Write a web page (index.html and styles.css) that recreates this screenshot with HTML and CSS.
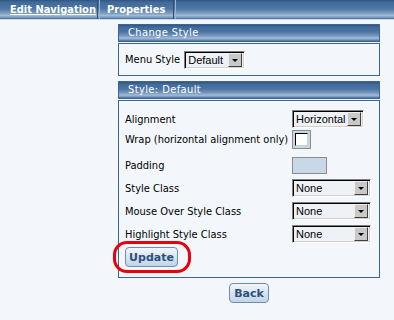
FILE: index.html
```html
<!DOCTYPE html>
<html lang="en">
<head>
    <meta charset="UTF-8">
    <title>Edit Navigation</title>
    <link rel="stylesheet" href="styles.css">
</head>
<body>
    <div class="tabbar">
        <span class="tab-cap"></span>
        <a class="tab tab-active" href="#">Edit Navigation</a>
        <span class="tab-sep"></span>
        <a class="tab tab-props" href="#">Properties</a>
        <span class="tab-sep"></span>
    </div>

    <div class="content">
        <div class="panel">
            <div class="panel-header">Change Style</div>
            <div class="panel-body panel-body-short">
                <span class="label">Menu Style</span>
                <div class="combo combo-default">
                    <span class="combo-text">Default</span>
                    <span class="combo-btn"><span class="arrow"></span></span>
                </div>
            </div>
        </div>

        <div class="panel">
            <div class="panel-header">Style: Default</div>
            <div class="panel-body">
                <div class="row row-first">
                    <span class="label">Alignment</span>
                    <div class="combo combo-align">
                        <span class="combo-text">Horizontal</span>
                        <span class="combo-btn"><span class="arrow"></span></span>
                    </div>
                </div>
                <div class="row row-wrap">
                    <span class="label">Wrap (horizontal alignment only)</span>
                    <span class="checkbox"><span class="check-inner"></span></span>
                </div>
                <div class="row row-padding">
                    <span class="label">Padding</span>
                    <span class="textbox"></span>
                </div>
                <div class="row">
                    <span class="label">Style Class</span>
                    <div class="combo combo-wide">
                        <span class="combo-text">None</span>
                        <span class="combo-btn"><span class="arrow"></span></span>
                    </div>
                </div>
                <div class="row">
                    <span class="label">Mouse Over Style Class</span>
                    <div class="combo combo-wide">
                        <span class="combo-text">None</span>
                        <span class="combo-btn"><span class="arrow"></span></span>
                    </div>
                </div>
                <div class="row">
                    <span class="label">Highlight Style Class</span>
                    <div class="combo combo-wide">
                        <span class="combo-text">None</span>
                        <span class="combo-btn"><span class="arrow"></span></span>
                    </div>
                </div>
                <div class="update-wrap">
                    <button class="btn">Update</button>
                    <span class="highlight-ring"></span>
                </div>
            </div>
        </div>

        <div class="back-row">
            <button class="btn">Back</button>
        </div>
    </div>
</body>
</html>
```

FILE: styles.css
```css
:root {
    --page-bg: #f3f7fb;
    --panel-border: #3a6595;
    --bar-grad: linear-gradient(#2f5680 0%, #41699a 12%, #4d76a3 45%, #7c9dc2 70%, #a3bcd6 82%, #6f91b7 94%, #3a6595 100%);
}

* {
    margin: 0;
    padding: 0;
    box-sizing: border-box;
}

body {
    font-family: 'DejaVu Sans Condensed', 'DejaVu Sans', sans-serif;
    font-size: 11px;
    background: var(--page-bg);
    color: #000;
}

.tabbar {
    height: 20px;
    background: var(--bar-grad);
    border-bottom: 1px solid #cfdbe8;
    display: flex;
    align-items: center;
}

.tab-cap {
    width: 10px;
    height: 100%;
}

.tab {
    color: #fff;
    font-weight: bold;
    font-size: 11px;
    text-decoration: none;
    white-space: nowrap;
    line-height: 18px;
}

.tab-active {
    text-decoration: underline;
    width: 87px;
}

.tab-props {
    width: 66px;
}

.tab-sep {
    width: 3px;
    height: 100%;
    border-left: 1px solid #2d527c;
    border-right: 1px solid #9bb4d0;
    margin-right: 7px;
}

.content {
    margin: 4px 0 0 118px;
    width: 262px;
}

.panel {
    margin-bottom: 5px;
}

.panel-header {
    height: 18px;
    background: var(--bar-grad);
    border: 1px solid var(--panel-border);
    color: #fff;
    letter-spacing: 0.4px;
    padding-left: 9px;
    line-height: 16px;
}

.panel-body {
    border: 1px solid var(--panel-border);
    margin-top: 1px;
    padding: 9px 6px 10px 6px;
    background: var(--page-bg);
}

.panel-body-short {
    height: 33px;
    display: flex;
    align-items: center;
    gap: 4px;
    padding: 0 6px;
}

.row {
    display: grid;
    grid-template-columns: 167px auto;
    align-items: center;
    height: 18px;
    margin-top: 5px;
    white-space: nowrap;
}

.row-first {
    margin-top: 0;
}

.row-wrap {
    height: 19px;
    margin-top: 2px;
}

.row-padding {
    height: 17px;
    margin-top: 8px;
}

.combo {
    display: flex;
    height: 18px;
    background: #eef2f7;
    border: 1px solid;
    border-color: #808080 #fff #fff #808080;
    box-shadow: inset 1px 1px 0 #000, inset -1px -1px 0 #d4d0c8;
    padding: 2px;
    align-items: center;
    font-family: 'Liberation Sans', sans-serif;
    font-size: 11px;
}

.combo-default {
    width: 61px;
}

.combo-align {
    width: 72px;
}

.combo-wide {
    width: 79px;
}

.combo-text {
    flex: 1;
    padding-left: 1px;
    line-height: 14px;
    overflow: hidden;
    white-space: nowrap;
}

.combo-btn {
    flex: none;
    width: 14px;
    height: 14px;
    background: #c8c8c8;
    border: 1px solid;
    border-color: #eee #404040 #404040 #eee;
    display: flex;
    align-items: center;
    justify-content: center;
}

.arrow {
    width: 0;
    height: 0;
    border-left: 3px solid transparent;
    border-right: 3px solid transparent;
    border-top: 3px solid #000;
    margin-top: 1px;
}

.checkbox {
    width: 19px;
    height: 19px;
    background: #c6d7e8;
    border: 1px solid #8c8c8c;
    padding: 2px;
}

.check-inner {
    display: block;
    width: 13px;
    height: 13px;
    background: #fff;
    border-top: 1px solid #000;
    border-left: 1px solid #000;
    border-right: 1px solid #d0d0d0;
    border-bottom: 1px solid #d0d0d0;
}

.textbox {
    width: 35px;
    height: 17px;
    background: #c8d8e8;
    border: 1px solid #8c8c8c;
}

.update-wrap {
    position: relative;
    margin-top: 4px;
    height: 20px;
}

.btn {
    font-family: 'DejaVu Sans', sans-serif;
    font-weight: bold;
    font-size: 11px;
    color: #2c4f7c;
    background: linear-gradient(#f2f6fb, #d4e1ee 60%, #c2d4e7);
    border: 1px solid #6d8db3;
    border-radius: 4px;
    height: 20px;
    padding: 0;
}

.update-wrap .btn {
    width: 53px;
}

.highlight-ring {
    position: absolute;
    left: -12px;
    top: -6px;
    width: 78px;
    height: 32px;
    border: 3px solid #e8000b;
    border-radius: 14px;
}

.back-row {
    display: flex;
    justify-content: center;
    margin-top: 1px;
}

.back-row .btn {
    width: 40px;
}
```
